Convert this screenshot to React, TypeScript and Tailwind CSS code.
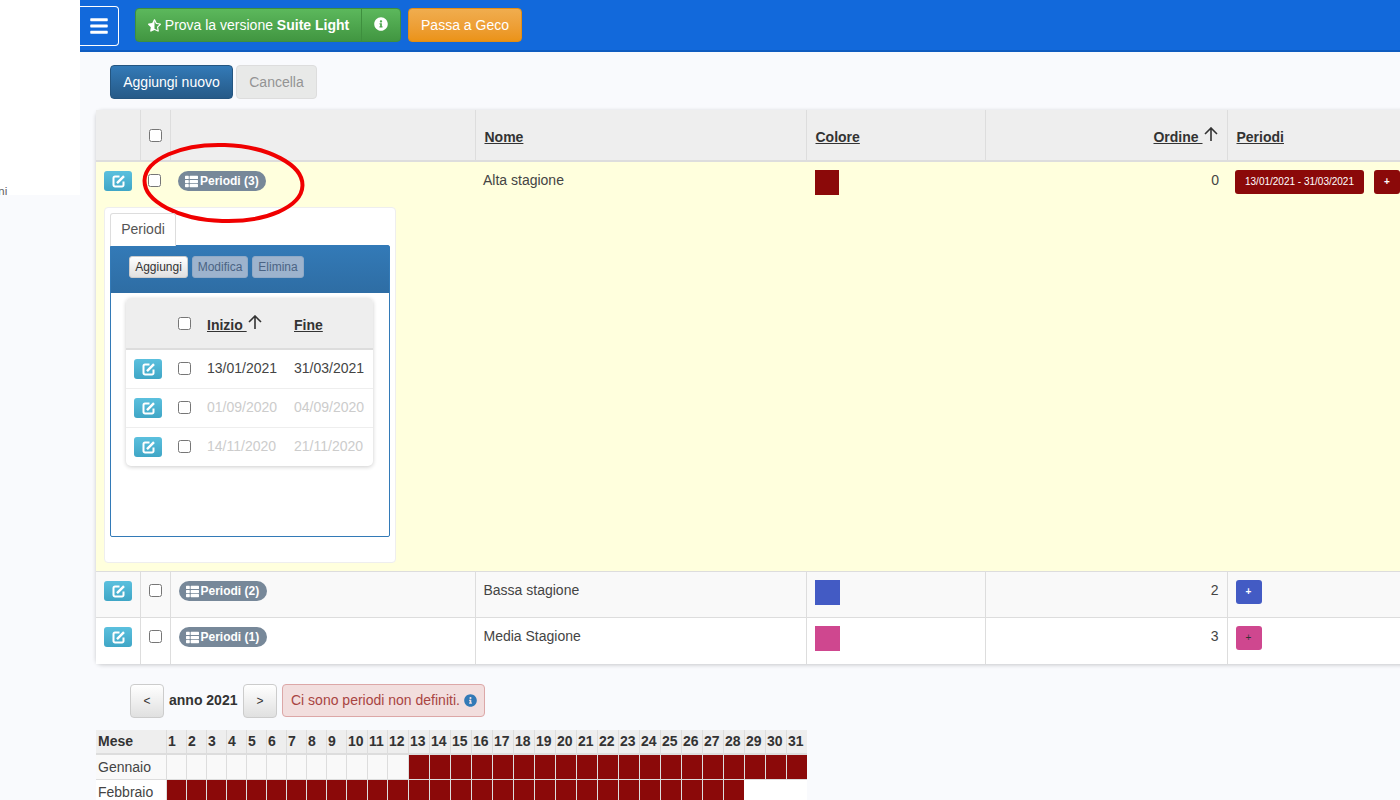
import React from "react";
import { FaBars, FaInfoCircle, FaStarHalfAlt, FaThList } from "react-icons/fa";

const days = Array.from({ length: 31 }, (_, i) => i + 1);

const EditButton = () => (
  <button className="flex h-5 w-7 items-center justify-center rounded-[3px] bg-gradient-to-b from-[#5bc0de] to-[#3fa6c6] text-white">
    <svg viewBox="0 0 14 14" className="ml-[1px] h-[14px] w-[14px]" fill="none" stroke="currentColor">
      <path d="M7.500 2.500H3A1.500 1.500 0 0 0 1.500 4v7A1.500 1.500 0 0 0 3 12.500h7a1.500 1.500 0 0 0 1.500-1.500V7.500" strokeWidth="2" />
      <path d="M5 9.200 12 2.200" strokeWidth="2.400" />
    </svg>
  </button>
);

const PeriodiBadge = ({ n }: { n: number }) => (
  <span className="inline-flex h-5 w-[88px] items-center gap-[2px] rounded-full bg-[#778899] pl-[7px] text-xs font-bold whitespace-nowrap text-white">
    <FaThList className="text-[13px]" />
    Periodi ({n})
  </span>
);

const SortArrow = () => (
  <svg viewBox="0 0 14 14" className="mr-[2px] ml-[1px] inline-block h-[14px] w-[14px] align-[1px] text-[#333]" fill="none" stroke="currentColor" strokeWidth="1.600">
    <path d="M7 14V1M1 7 7 1l6 6" />
  </svg>
);

const PeriodRow = ({ from, to, muted, first }: { from: string; to: string; muted?: boolean; first?: boolean }) => (
  <tr className={`h-[39px] ${first ? "" : "border-t border-[#eee]"}`}>
    <td className="pl-2">
      <EditButton />
    </td>
    <td className="pl-[10px]">
      <input type="checkbox" className="block" />
    </td>
    <td className={`pb-[2px] pl-[10px] ${muted ? "text-[#ccc]" : "text-[#444]"}`}>{from}</td>
    <td className={`pb-[2px] pl-[10px] ${muted ? "text-[#ccc]" : "text-[#444]"}`}>{to}</td>
  </tr>
);

export default function App() {
  return (
    <div className="relative flex h-[800px] w-[1400px] overflow-hidden bg-[#f9fafd] font-['Liberation_Sans',Arial,sans-serif] text-sm text-[#333]">
      {/* Sidebar */}
      <aside className="flex h-[195px] w-20 shrink-0 items-end overflow-hidden bg-white text-xs text-[#666]">
        <span className="-mb-[5px] -ml-[2px]">ni</span>
      </aside>

      <main className="min-w-0 flex-1">
        {/* Top bar */}
        <header className="flex h-[52px] items-start border-b-2 border-[#0f5cc0] bg-[#1269db] pt-[6px]">
          <button className="flex h-10 w-[39px] items-center justify-center rounded-r-[4px] border border-l-0 border-white text-white">
            <FaBars className="text-[20px]" />
          </button>
          <div className="mt-[2px] ml-4 flex h-[34px] w-[266px] overflow-hidden rounded-[4px] border border-[#3e8f3e] bg-gradient-to-b from-[#5cb85c] to-[#419641] text-white">
            <span className="flex w-[226px] items-center justify-center gap-1 border-r border-[#3e8f3e]">
              <FaStarHalfAlt className="text-[13px]" />
              <span>
                Prova la versione <b>Suite Light</b>
              </span>
            </span>
            <span className="flex flex-1 items-center justify-center pb-[2px]">
              <FaInfoCircle className="text-[14px]" />
            </span>
          </div>
          <button className="mt-[2px] ml-[7px] h-[34px] w-[114px] rounded-[4px] border border-[#e38d13] bg-gradient-to-b from-[#f0ad4e] to-[#eb9316] text-white">
            Passa a Geco
          </button>
        </header>

        {/* Toolbar */}
        <div className="mt-[13px] flex gap-[3px] pl-[30px]">
          <button className="h-[34px] w-[123px] rounded-[4px] border border-[#245580] bg-gradient-to-b from-[#337ab7] to-[#265a88] text-white">
            Aggiungi nuovo
          </button>
          <button className="h-[34px] w-[81px] rounded-[4px] border border-[#ddd] bg-[#e8e9e8] text-[#949494]">
            Cancella
          </button>
        </div>

        {/* Main table */}
        <div className="mt-[11px] ml-4 w-[1329px] rounded-[6px] bg-white shadow-[0_1px_4px_rgba(0,0,0,0.2)]">
          <table className="w-full table-fixed border-collapse">
            <colgroup>
              <col className="w-[44px]" />
              <col className="w-[30px]" />
              <col className="w-[305px]" />
              <col className="w-[331px]" />
              <col className="w-[179px]" />
              <col className="w-[242px]" />
              <col />
            </colgroup>
            <thead>
              <tr className="h-[51px] border-b-2 border-[#ddd] bg-[#eee] font-bold">
                <th className="border-r border-[#ddd]" />
                <th className="border-r border-[#ddd] pl-[8px] text-left">
                  <input type="checkbox" className="block" />
                </th>
                <th className="border-r border-[#ddd]" />
                <th className="border-r border-[#ddd] pt-[3px] pr-2 pl-[9px] text-left underline">Nome</th>
                <th className="border-r border-[#ddd] pt-[3px] pr-2 pl-[9px] text-left underline">Colore</th>
                <th className="border-r border-[#ddd] pt-[3px] pr-[7px] pl-2 text-right">
                  <span className="underline">Ordine&nbsp;</span>
                  <SortArrow />
                </th>
                <th className="pt-[3px] pr-2 pl-[9px] text-left underline">Periodi</th>
              </tr>
            </thead>
            <tbody className="text-[#444]">
              {/* Alta stagione */}
              <tr className="h-[45px] bg-[#ffffdd] align-top">
                <td className="pt-[9px] pl-2">
                  <EditButton />
                </td>
                <td className="pt-3 pl-[8px]">
                  <input type="checkbox" className="block" />
                </td>
                <td className="pt-[9px] pl-[8px]">
                  <PeriodiBadge n={3} />
                </td>
                <td className="px-2 pt-[8px]">Alta stagione</td>
                <td className="pt-[8px] pl-[9px]">
                  <div className="h-[25px] w-[24px] bg-[#8b0909]" />
                </td>
                <td className="px-2 pt-[8px] text-right">0</td>
                <td className="pt-[8px] pl-2">
                  <div className="flex gap-[10px]">
                    <span className="flex h-6 w-[129px] items-center justify-center rounded-[3px] bg-[#8b0909] text-[10px] whitespace-nowrap text-white">
                      13/01/2021 - 31/03/2021
                    </span>
                    <span className="flex h-6 w-[26px] items-center justify-center rounded-[3px] bg-[#8b0909] text-[10px] font-bold text-white">
                      +
                    </span>
                  </div>
                </td>
              </tr>
              <tr className="bg-[#ffffdd]">
                <td colSpan={7} className="pt-[1px] pr-2 pb-2 pl-2">
                  <div className="h-[356px] w-[292px] rounded-[4px] border border-[#eee] bg-white px-[5px] pt-[5px]">
                    <div className="relative z-10 -mb-[1px] flex h-[33px] w-[66px] items-center justify-center rounded-t-[3px] border border-b-0 border-[#ddd] bg-white pb-[2px] text-[#555]">
                      Periodi
                    </div>
                    <div className="h-[292px] w-[280px] rounded-[2px] border border-[#337ab7] bg-white">
                      <div className="flex h-[47px] items-start gap-1 bg-gradient-to-b from-[#337ab7] to-[#2e6da4] pt-[10px] pl-[18px] text-xs">
                        <button className="h-[22px] w-[59px] rounded-[3px] border border-[#ccc] bg-gradient-to-b from-white to-[#e0e0e0] text-[#333]">
                          Aggiungi
                        </button>
                        <button className="h-[22px] w-[56px] rounded-[3px] border border-[#8fa9c6] bg-[#9db3cd] text-[#4b6484]">
                          Modifica
                        </button>
                        <button className="h-[22px] w-[52px] rounded-[3px] border border-[#8fa9c6] bg-[#9db3cd] text-[#4b6484]">
                          Elimina
                        </button>
                      </div>
                      <div className="mt-[5px] ml-[15px] w-[247px] overflow-hidden rounded-[5px] bg-white shadow-[0_1px_4px_rgba(0,0,0,0.2)]">
                        <table className="w-full table-fixed border-collapse">
                          <colgroup>
                            <col className="w-[42px]" />
                            <col className="w-[29px]" />
                            <col className="w-[87px]" />
                            <col />
                          </colgroup>
                          <thead>
                            <tr className="h-[51px] border-b-2 border-[#ddd] bg-[#eee] font-bold text-[#333]">
                              <th />
                              <th className="pl-[10px] text-left">
                                <input type="checkbox" className="block" />
                              </th>
                              <th className="pt-[4px] pl-[10px] text-left whitespace-nowrap">
                                <span className="underline">Inizio&nbsp;</span>
                                <SortArrow />
                              </th>
                              <th className="pt-[4px] pl-[10px] text-left underline">Fine</th>
                            </tr>
                          </thead>
                          <tbody>
                            <PeriodRow from="13/01/2021" to="31/03/2021" first />
                            <PeriodRow from="01/09/2020" to="04/09/2020" muted />
                            <PeriodRow from="14/11/2020" to="21/11/2020" muted />
                          </tbody>
                        </table>
                      </div>
                    </div>
                  </div>
                </td>
              </tr>

              {/* Bassa stagione */}
              <tr className="h-[46px] border-t border-[#ddd] bg-[#f9f9f9] align-top">
                <td className="border-r border-[#ddd] pt-[9px] pl-2">
                  <EditButton />
                </td>
                <td className="border-r border-[#ddd] pt-[12px] pl-[8px]">
                  <input type="checkbox" className="block" />
                </td>
                <td className="border-r border-[#ddd] pt-[9px] pl-2">
                  <PeriodiBadge n={2} />
                </td>
                <td className="border-r border-[#ddd] px-2 pt-[8px]">Bassa stagione</td>
                <td className="border-r border-[#ddd] px-2 pt-[8px]">
                  <div className="h-[25px] w-[25px] bg-[#435bc4]" />
                </td>
                <td className="border-r border-[#ddd] px-2 pt-[8px] text-right">2</td>
                <td className="pt-[8px] pl-2">
                  <span className="flex h-6 w-[26px] items-center justify-center rounded-[3px] bg-[#435bc4] text-[10px] font-bold text-white">
                    +
                  </span>
                </td>
              </tr>

              {/* Media Stagione */}
              <tr className="h-[46px] border-t border-[#ddd] bg-white align-top">
                <td className="border-r border-[#ddd] pt-[9px] pl-2">
                  <EditButton />
                </td>
                <td className="border-r border-[#ddd] pt-[12px] pl-[8px]">
                  <input type="checkbox" className="block" />
                </td>
                <td className="border-r border-[#ddd] pt-[9px] pl-2">
                  <PeriodiBadge n={1} />
                </td>
                <td className="border-r border-[#ddd] px-2 pt-[8px]">Media Stagione</td>
                <td className="border-r border-[#ddd] px-2 pt-[8px]">
                  <div className="h-[25px] w-[25px] bg-[#cf478f]" />
                </td>
                <td className="border-r border-[#ddd] px-2 pt-[8px] text-right">3</td>
                <td className="pt-[8px] pl-2">
                  <span className="flex h-6 w-[26px] items-center justify-center rounded-[3px] bg-[#cf478f] text-[10px] text-[#333]">
                    +
                  </span>
                </td>
              </tr>
            </tbody>
          </table>
        </div>

        {/* Year navigation */}
        <div className="mt-5 flex items-center pl-[50px]">
          <button className="h-[34px] w-[34px] rounded-[4px] border border-[#ccc] bg-gradient-to-b from-white to-[#e0e0e0] text-xs text-[#333]">
            &lt;
          </button>
          <b className="mx-[5px] w-[69px] pb-[2px] whitespace-nowrap">anno 2021</b>
          <button className="h-[34px] w-[34px] rounded-[4px] border border-[#ccc] bg-gradient-to-b from-white to-[#e0e0e0] text-xs text-[#333]">
            &gt;
          </button>
          <div className="ml-[5px] flex h-[33px] w-[203px] items-center gap-1 rounded-[4px] border border-[#dca7a7] bg-[#f2dede] pb-[1px] pl-2 text-[#a94442]">
            Ci sono periodi non definiti.
            <FaInfoCircle className="text-[13px] text-[#337ab7]" />
          </div>
        </div>

        {/* Calendar */}
        <div className="mt-[12px] ml-4 grid w-[711px] grid-cols-[70px_repeat(9,20px)_21px_20px_21px_repeat(19,21px)] rounded-t-[5px] bg-white">
          <div className="flex h-[25px] items-center border-b-2 border-[#ddd] bg-[#eee] pl-[2px] font-bold">Mese</div>
          {days.map((d) => (
            <div key={d} className="flex h-[25px] items-center border-b-2 border-l border-[#ddd] bg-[#eee] pl-[1px] font-bold">
              {d}
            </div>
          ))}
          <div className="flex h-[25px] items-center border-b border-[#ddd] bg-[#f9f9f9] pl-[2px] text-[#444]">Gennaio</div>
          {days.map((d) => (
            <div key={d} className={`h-[25px] border-b border-l border-[#ddd] ${d >= 13 ? "bg-[#8b0909]" : "bg-[#f9f9f9]"}`} />
          ))}
          <div className="flex h-[25px] items-center border-b border-[#ddd] pl-[2px] text-[#444]">Febbraio</div>
          {days.map((d) => (
            <div key={d} className={`h-[25px] ${d <= 28 ? "border-b border-l border-[#ddd] bg-[#8b0909]" : "bg-white"}`} />
          ))}
        </div>
      </main>

      {/* Hand drawn highlight */}
      <svg className="pointer-events-none absolute top-[140px] left-[138px] h-[90px] w-[172px]" viewBox="0 0 172 90" fill="none">
        <ellipse cx="85.500" cy="43" rx="79" ry="38" stroke="#f00000" strokeWidth="4" transform="rotate(2 85 43)" />
      </svg>
    </div>
  );
}
